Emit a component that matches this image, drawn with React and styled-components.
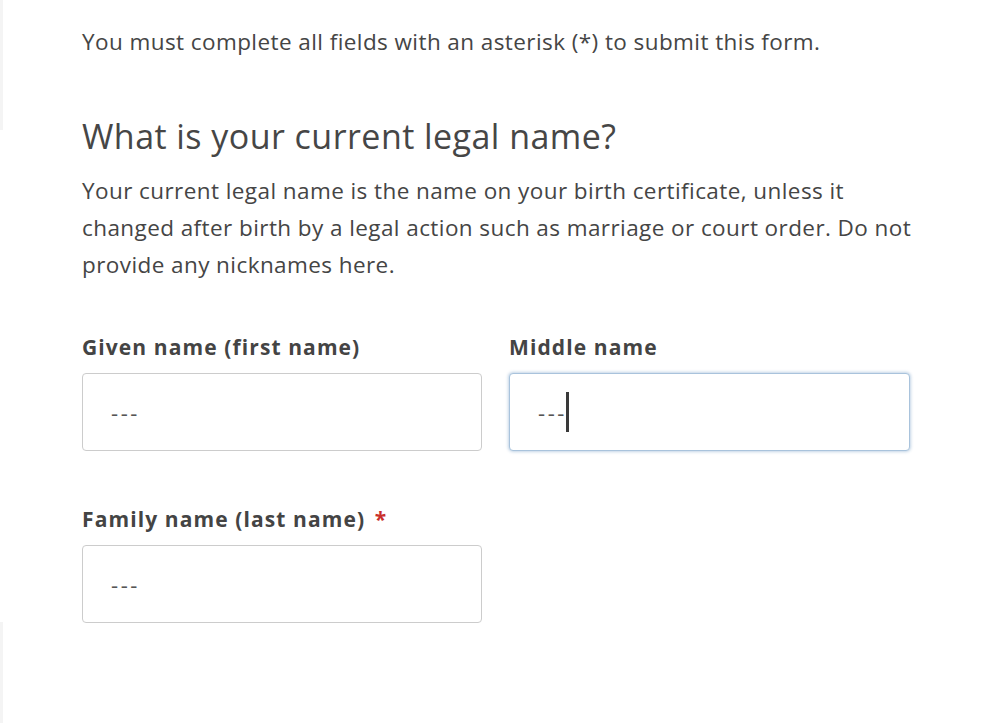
import React from 'react'
import styled, { createGlobalStyle } from 'styled-components'

const GlobalStyle = createGlobalStyle`
    html, body {
        margin: 0;
        padding: 0;
        background: #ffffff;
    }
    body {
        font-family: "Open Sans", "Liberation Sans", sans-serif;
        color: #454545;
    }
`

function App() {
    return (
        <Page>
            <GlobalStyle />
            <Rail>
                <RailPiece size={130} />
                <RailGap />
                <RailPiece size={101} />
            </Rail>
            <Form>
                <Intro>You must complete all fields with an asterisk (*) to submit this form.</Intro>
                <Heading>What is your current legal name?</Heading>
                <Hint>
                    Your current legal name is the name on your birth certificate, unless it
                    changed after birth by a legal action such as marriage or court order. Do not
                    provide any nicknames here.
                </Hint>
                <Grid>
                    <Group>
                        <Label>Given name (first name)</Label>
                        <Field>
                            <Value>---</Value>
                        </Field>
                    </Group>
                    <Group>
                        <Label>Middle name</Label>
                        <Field focused>
                            <Value>---</Value>
                            <Caret />
                        </Field>
                    </Group>
                    <Group>
                        <Label>
                            Family name (last name) <Required>*</Required>
                        </Label>
                        <Field>
                            <Value>---</Value>
                        </Field>
                    </Group>
                </Grid>
            </Form>
        </Page>
    )
}

export default App

const Page = styled.div`
    display: flex;
    min-height: 723px;
    width: 1000px;
    overflow: hidden;
`

const Rail = styled.div`
    width: 3px;
    display: flex;
    flex-direction: column;
`

const RailPiece = styled.div`
    height: ${props => props.size}px;
    background: #f4f4f4;
`

const RailGap = styled.div`
    flex: 1;
`

const Form = styled.div`
    padding: 26px 0 0 79px;
    width: 828px;
`

const Intro = styled.p`
    margin: 0;
    font-size: 22.5px;
    letter-spacing: 0.42px;
    line-height: 32px;
`

const Heading = styled.h2`
    margin: 58px 0 0;
    font-size: 34px;
    letter-spacing: 0.45px;
    font-weight: 400;
    line-height: 40px;
    color: #464646;
`

const Hint = styled.p`
    margin: 16px 0 0;
    font-size: 22.5px;
    letter-spacing: 0.42px;
    line-height: 37px;
    width: 848px;
`

const Grid = styled.div`
    display: grid;
    grid-template-columns: 400px 401px;
    column-gap: 27px;
    row-gap: 53px;
    margin-top: 49px;
`

const Group = styled.div`
    display: flex;
    flex-direction: column;
`

const Label = styled.label`
    font-size: 21px;
    letter-spacing: 1.1px;
    font-weight: 700;
    line-height: 30px;
    color: #444444;
    margin-bottom: 11px;
`

const Required = styled.span`
    color: #c9302c;
    margin-left: 3px;
`

const Field = styled.div`
    box-sizing: border-box;
    height: 78px;
    display: flex;
    align-items: center;
    padding-left: 28px;
    border-radius: 4px;
    background: #ffffff;
    border: 1px solid ${props => props.focused ? '#a9c3dc' : '#cccccc'};
    box-shadow: ${props => props.focused ? '0 0 3px 1px rgba(120, 160, 200, 0.45)' : 'none'};
`

const Value = styled.span`
    font-size: 22px;
    color: #555555;
    letter-spacing: 2.6px;
`

const Caret = styled.span`
    width: 3px;
    height: 40px;
    background: #3a3a3a;
    margin-left: -1px;
`
